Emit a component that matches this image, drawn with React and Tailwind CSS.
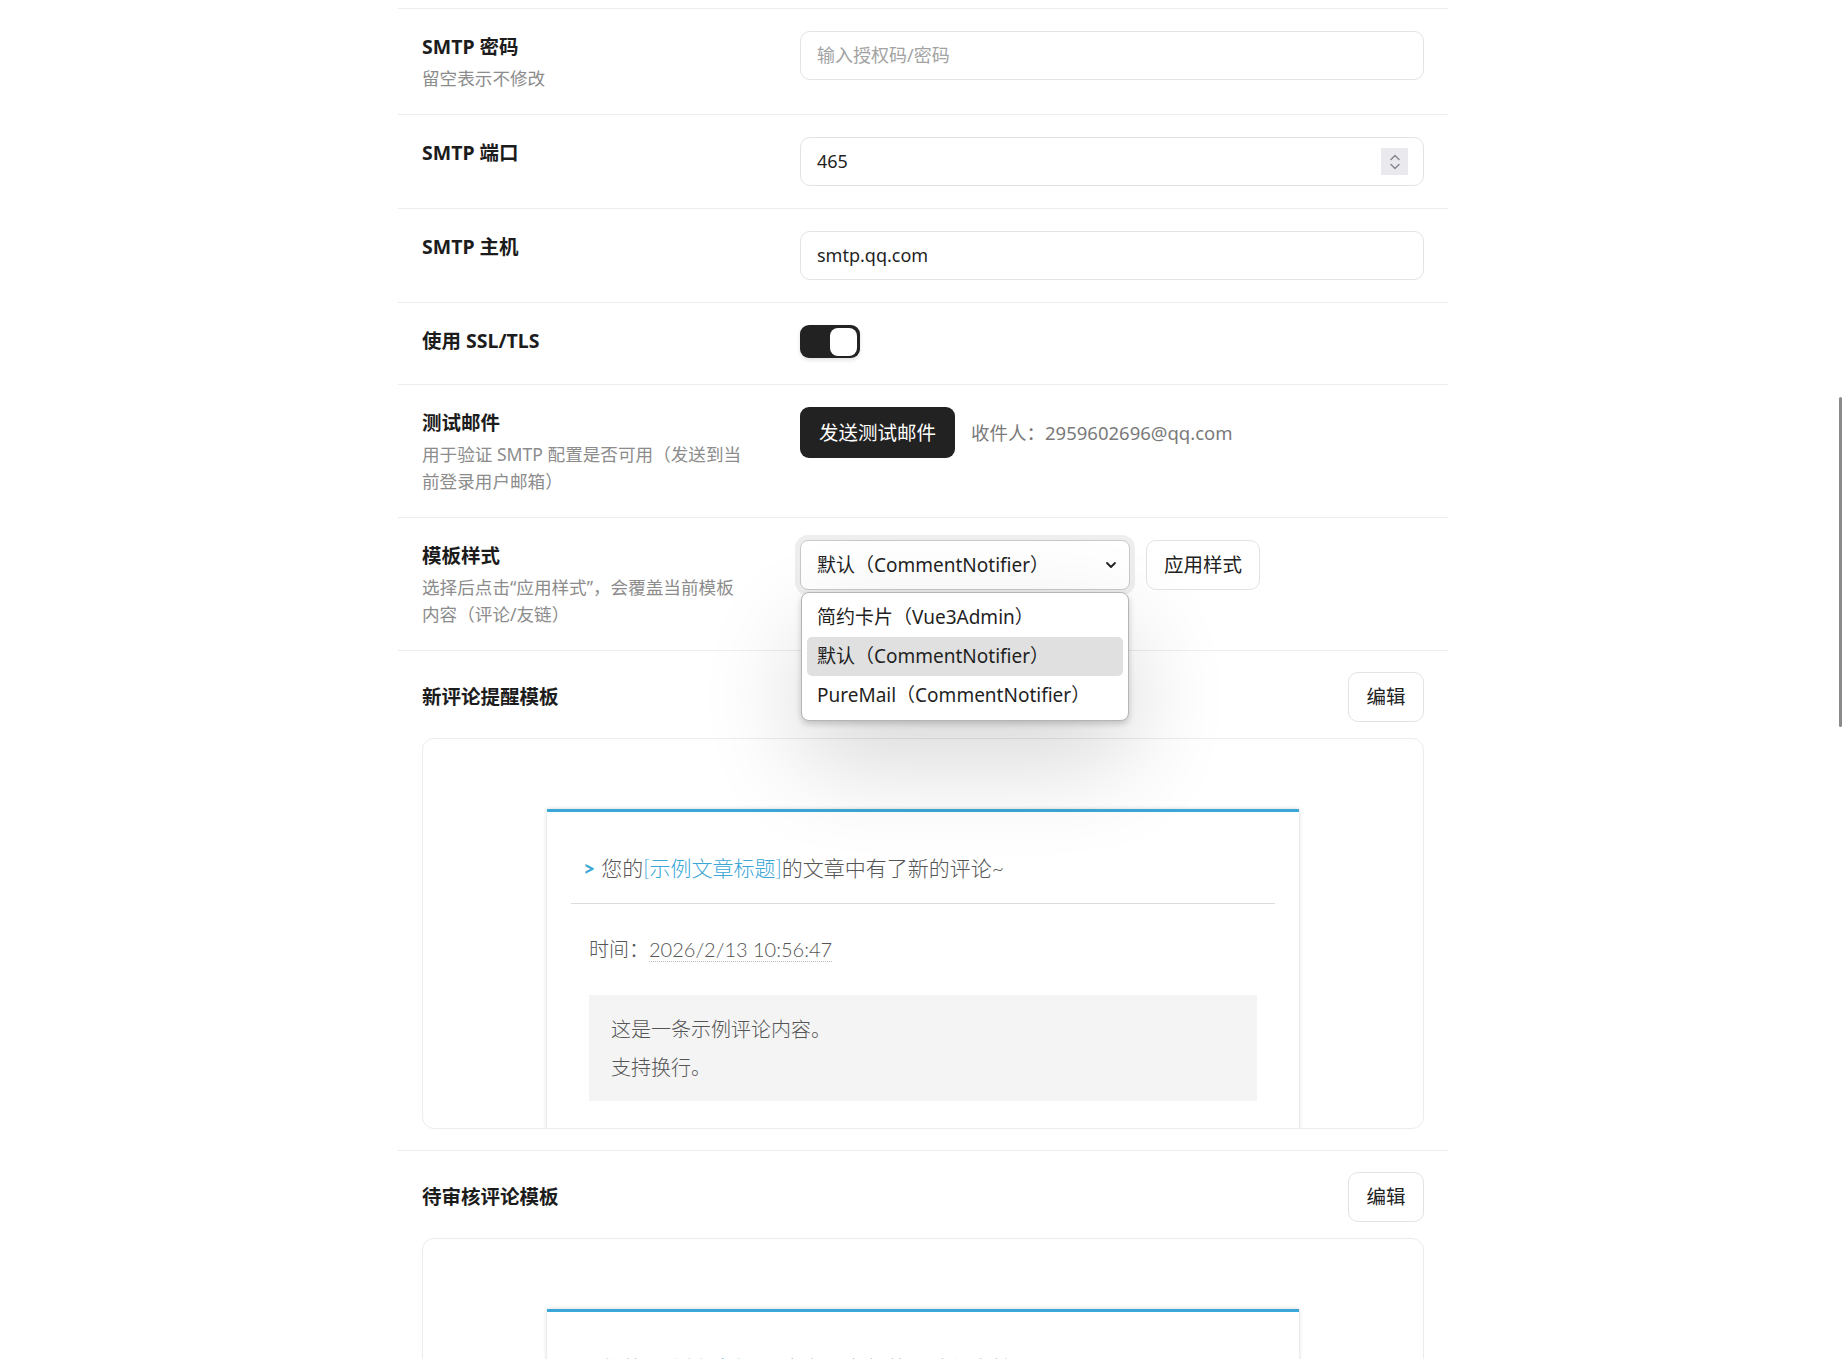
import React from "react";

const labelCls = "text-[19.5px] font-bold leading-[28px] text-[#1c1c1c]";
const descCls = "mt-1 text-[17.6px] leading-[27px] text-[#8c8c8c]";

function Row({ label, desc, children }) {
  return (
    <div className="grid grid-cols-[326px_1fr] gap-x-[52px] border-b border-[#ededed] px-6 py-[22px]">
      <div className="pt-[2px]">
        <div className={labelCls}>{label}</div>
        {desc && <div className={descCls}>{desc}</div>}
      </div>
      <div>{children}</div>
    </div>
  );
}

function TextBox({ value, placeholder, spinner }) {
  return (
    <div className="flex h-[49px] items-center justify-between rounded-[10px] border border-[#e3e3e3] bg-white pl-4 pr-[15px] text-[18px]">
      {value ? (
        <span className="text-[#1f1f1f]">{value}</span>
      ) : (
        <span className="text-[#a3a3a3]">{placeholder}</span>
      )}
      {spinner && (
        <div className="flex h-[27px] w-[27px] items-center justify-center bg-[#e9e9ee]">
          <svg width="12" height="20" viewBox="0 0 12 20" fill="none" stroke="#8a8a94" strokeWidth="1.6" strokeLinecap="round" strokeLinejoin="round">
            <path d="M2 7.5 6 3.5l4 4" />
            <path d="M2 12.5l4 4 4-4" />
          </svg>
        </div>
      )}
    </div>
  );
}

function EmailCard({ pending }) {
  return (
    <div className="mx-auto w-[752px] border-t-[3px] border-[#3ba7d7] bg-white font-light text-[#555] shadow-[0_0_4px_rgba(0,0,0,0.18)] [font-family:Lato,'Noto_Sans_CJK_SC',sans-serif]">
      <div className="px-6">
        <div className="border-b border-[#dcdcdc] px-3 pt-[40px] pb-[19px] text-[21px] leading-[32px]">
          <span className="mr-[6px] font-bold text-[#3ba7d7]">&gt;</span>
          您的<span className="text-[#3ba7d7]">[示例文章标题]</span>
          {pending ? "中有一条新的评论待审核~" : "的文章中有了新的评论~"}
        </div>
        <div className="px-[18px] pb-8">
          <div className="mt-[29px] text-[20px] leading-[32px]">
            时间：
            <span className="border-b border-dotted border-[#bbb]">2026/2/13 10:56:47</span>
          </div>
          <div className="mt-[30px] bg-[#f4f4f4] px-[22px] py-[15px] text-[20px] leading-[38px]">
            <div>这是一条示例评论内容。</div>
            <div>支持换行。</div>
          </div>
        </div>
      </div>
    </div>
  );
}

function TemplateSection({ title, pending }) {
  return (
    <div className="border-b border-[#ededed] px-6 py-[21px]">
      <div className="flex items-center justify-between">
        <div className={labelCls}>{title}</div>
        <button className="h-[50px] w-[76px] rounded-[10px] border border-[#e3e3e3] bg-white text-[19.5px] text-[#222]">
          编辑
        </button>
      </div>
      <div className="mt-4 h-[391px] overflow-hidden rounded-[12px] border border-[#ececec] pt-[70px]">
        <EmailCard pending={pending} />
      </div>
    </div>
  );
}

export default function App() {
  const options = ["简约卡片（Vue3Admin）", "默认（CommentNotifier）", "PureMail（CommentNotifier）"];
  return (
    <div className="relative min-h-screen bg-white [font-family:'Noto_Sans','Noto_Sans_CJK_SC',sans-serif]">
      <div className="mx-auto w-[1050px]">
        <div className="h-[9px] border-b border-[#ededed]" />

        <Row label="SMTP 密码" desc="留空表示不修改">
          <TextBox placeholder="输入授权码/密码" />
        </Row>

        <Row label="SMTP 端口">
          <TextBox value="465" spinner />
        </Row>

        <Row label="SMTP 主机">
          <TextBox value="smtp.qq.com" />
        </Row>

        <Row label="使用 SSL/TLS">
          <div className="h-[37px]">
            <div className="flex h-[33px] w-[60px] items-center justify-end rounded-[9px] bg-[#222] pr-[3px] shadow-[0_2px_4px_rgba(0,0,0,0.12)]">
              <div className="h-[28px] w-[27px] rounded-[8px] bg-white" />
            </div>
          </div>
        </Row>

        <Row label="测试邮件" desc="用于验证 SMTP 配置是否可用（发送到当前登录用户邮箱）">
          <div className="flex items-center gap-4">
            <button className="h-[51px] w-[155px] rounded-[9px] bg-[#222] text-[19.5px] text-white">发送测试邮件</button>
            <span className="text-[18.5px] text-[#7a7a7a]">收件人：2959602696@qq.com</span>
          </div>
        </Row>

        <Row label="模板样式" desc="选择后点击“应用样式”，会覆盖当前模板内容（评论/友链）">
          <div className="flex items-center gap-4">
            <div className="relative z-10">
              <div className="flex h-[50px] w-[330px] items-center justify-between rounded-[8px] border border-[#c9c9c9] bg-white pl-4 pr-[12px] text-[19px] text-[#1f1f1f] ring-[5px] ring-[#eeeeee]">
                <span>默认（CommentNotifier）</span>
                <svg width="12" height="8" viewBox="0 0 12 8" fill="none" stroke="#222" strokeWidth="1.8" strokeLinecap="round" strokeLinejoin="round">
                  <path d="M2 2l4 4 4-4" />
                </svg>
              </div>
              <div className="absolute top-[52px] left-[1px] w-[328px] rounded-[8px] border border-[#b5b5b5] bg-white p-[5px] shadow-[0_3px_6px_rgba(0,0,0,0.18),0_40px_100px_rgba(0,0,0,0.16)]">
                {options.map((o, i) => (
                  <div
                    key={o}
                    className={
                      "flex h-[39px] items-center rounded-[5px] px-[10px] text-[19px] text-[#1f1f1f] " +
                      (i === 1 ? "bg-[#e0e0e0]" : "")
                    }
                  >
                    {o}
                  </div>
                ))}
              </div>
            </div>
            <button className="h-[50px] w-[114px] rounded-[10px] border border-[#e3e3e3] bg-white text-[19.5px] text-[#222]">
              应用样式
            </button>
          </div>
        </Row>

        <TemplateSection title="新评论提醒模板" />
        <TemplateSection title="待审核评论模板" pending />
      </div>

      <div className="absolute top-[397px] left-[1839px] h-[330px] w-[3px] rounded-full bg-[#8a8a8a]" />
    </div>
  );
}
